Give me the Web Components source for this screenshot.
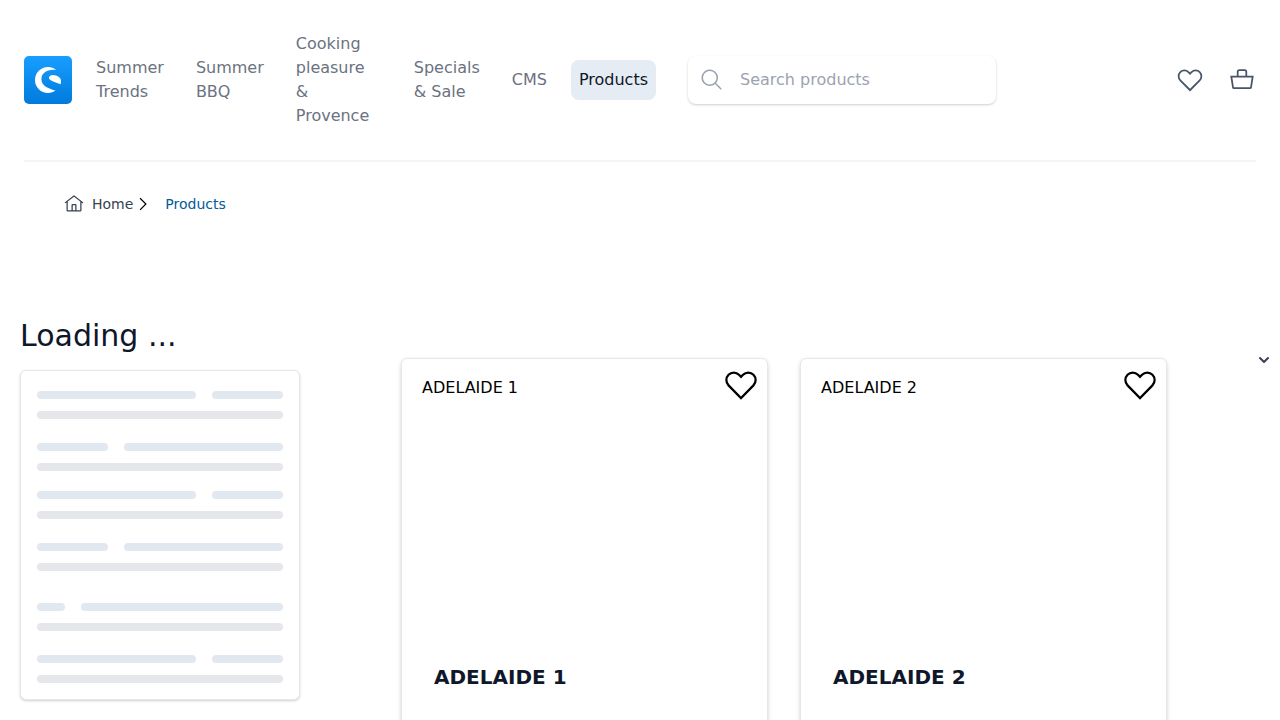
<!DOCTYPE html>
<html lang="en">
<head>
<meta charset="utf-8">
<meta name="viewport" content="width=device-width, initial-scale=1">
<title>Products</title>
<style>
body { margin: 0; background: #fff; color: #000; font: 16px/24px "DejaVu Sans", sans-serif; }
</style>
</head>
<body>
<shop-header>
  <nav-item href="#trends">Summer Trends</nav-item>
  <nav-item href="#bbq">Summer BBQ</nav-item>
  <nav-item href="#cooking">Cooking pleasure &amp; Provence</nav-item>
  <nav-item href="#sale">Specials &amp; Sale</nav-item>
  <nav-item href="#cms">CMS</nav-item>
  <nav-item href="#products" active>Products</nav-item>
</shop-header>
<shop-breadcrumb></shop-breadcrumb>
<shop-listing>
  <filter-skeleton slot="filters"></filter-skeleton>
  <product-card name="ADELAIDE 1"></product-card>
  <product-card name="ADELAIDE 2"></product-card>
</shop-listing>

<script>
const ICONS = {
  heart: '0 0 32 32|M22.45,6a5.47,5.47,0,0,1,3.91,1.64,5.7,5.7,0,0,1,0,8L16,26.13,5.64,15.64a5.7,5.7,0,0,1,0-8,5.48,5.48,0,0,1,7.82,0L16,10.24l2.53-2.58A5.44,5.44,0,0,1,22.45,6m0-2a7.47,7.47,0,0,0-5.34,2.24L16,7.36,14.89,6.24a7.49,7.49,0,0,0-10.68,0,7.72,7.72,0,0,0,0,10.82L16,29,27.79,17.06a7.72,7.72,0,0,0,0-10.82A7.49,7.49,0,0,0,22.45,4Z',
  bag: '0 0 28 28|M3.3 10.500H24.700L23 21.300Q22.900 22.200 22 22.200H6Q5.100 22.200 5 21.300ZM9.700 10.500V5.700Q9.700 4 11.400 4H16.600Q18.300 4 18.300 5.700V10.500|stroke',
  search: '0 0 32 32|M29,27.5859l-7.5521-7.5521a11.0177,11.0177,0,1,0-1.4141,1.4141L27.5859,29ZM4,13a9,9,0,1,1,9,9A9.01,9.01,0,0,1,4,13Z',
  home: '0 0 32 32|M16.6123,2.2138a1.01,1.01,0,0,0-1.2427,0L1,13.4194l1.2427,1.5717L4,13.6208V26a2.0041,2.0041,0,0,0,2,2H26a2.0037,2.0037,0,0,0,2-2V13.63L29.7573,15,31,13.4282ZM18,26H14V18h4Zm2,0V18a2.0023,2.0023,0,0,0-2-2H14a2.002,2.002,0,0,0-2,2v8H6V12.0615l10-7.79,10,7.8005V26Z',
  right: '0 0 32 32|M22 16L12 26l-1.4-1.4 8.6-8.6-8.6-8.6L12 6z',
  down: '0 0 20 20|M5.293 7.293a1 1 0 011.414 0L10 10.586l3.293-3.293a1 1 0 111.414 1.414l-4 4a1 1 0 01-1.414 0l-4-4a1 1 0 010-1.414z'
};
const BASE = `<style>
*, ::before { box-sizing: border-box; }
a { color: inherit; text-decoration: none; }
button { display: block; margin: 0; padding: 0; border: 0; background: none; color: inherit; font: inherit; cursor: pointer; }
</style>`;
function define(tag, markup) {
  customElements.define(tag, class extends HTMLElement {
    constructor() {
      super();
      const html = typeof markup === 'function' ? markup(this) : markup;
      this.attachShadow({ mode: 'open' }).innerHTML = BASE + html;
    }
  });
}

define('ui-icon', el => {
  const [box, d, mode] = ICONS[el.getAttribute('name')].split('|');
  return `<style>
    :host { display: block; flex: none; width: 24px; height: 24px; }
    svg { display: block; width: 100%; height: 100%; fill: currentColor; }
    .stroke { fill: none; stroke: currentColor; }
  </style><svg viewBox="${box}" aria-hidden="true"><path class="${mode || 'fill'}" stroke-width="1.75" d="${d}"/></svg>`
    .replace(mode ? '' : ' stroke-width="1.75"', '');
});

define('shop-logo', `<style>
    :host { display: block; flex: none; width: 48px; height: 48px; }
    svg { display: block; }
  </style>
  <a href="#home" aria-label="Shop home"><svg width="48" height="48" viewBox="0 0 48 48" aria-hidden="true">
    <defs><linearGradient id="g" x1="0" y1="0" x2="0" y2="1"><stop stop-color="#189eff"/><stop offset="1" stop-color="#007bdc"/></linearGradient></defs>
    <rect width="48" height="48" rx="5" fill="url(#g)"/>
    <path fill="#fff" d="M32.3 14C30 12 27.300 11 24 11A13 13 0 0 0 24 37C27 37 29.500 36.200 31.500 34.600C25.500 32.600 17.400 30.400 17.400 23.200C17.400 17 23.300 12.800 32.300 14Z"/>
    <path fill="#fff" d="M36.600 28.300C37.300 26 37 23.300 36.400 22.400C34 20 31.500 19 29 19C26.500 19 25 20.200 25 21.800C25 24.700 31 25.900 36.600 28.300Z"/>
  </svg></a>`);

define('nav-item', el => {
  const active = el.hasAttribute('active');
  return `<style>
    :host { display: block; color: #6b7280; }
    :host([active]) { color: #0f172a; }
    a { display: block; padding: 8px; border-radius: 8px; }
    :host([active]) a { background: #e5ecf3; }
  </style><a href="${el.getAttribute('href')}"${active ? ' aria-current="page"' : ''}><slot></slot></a>`;
});

define('search-box', `<style>
    :host { display: block; min-width: 0; }
    label { display: flex; align-items: center; gap: 16px; height: 48px; padding: 0 12px; border-radius: 8px; color: #9ca3af; background: #fff;
      box-shadow: 0 1px 3px rgba(0,0,0,.1), 0 1px 2px rgba(0,0,0,.1); }
    input { flex: 1; min-width: 0; padding: 0; border: 0; outline: 0; background: none; color: #111827; font: inherit; }
    input::placeholder { color: #9ca3af; opacity: 1; }
  </style>
  <label><ui-icon name="search"></ui-icon><input type="search" placeholder="Search products" aria-label="Search products"></label>`);

define('shop-header', `<style>
    :host { display: block; padding: 0 24px; }
    header { display: grid; grid-template-columns: minmax(0, 1fr) 25% 228px; gap: 32px; align-items: center; padding: 24px 0; border-bottom: 2px solid #f3f4f6; }
    .left, nav { display: flex; align-items: center; gap: 16px; min-width: 0; }
    .actions { display: flex; justify-content: flex-end; gap: 24px; color: #475569; }
    .actions ui-icon { width: 28px; height: 28px; }
  </style>
  <header>
    <div class="left"><shop-logo></shop-logo><nav aria-label="Main"><slot></slot></nav></div>
    <search-box></search-box>
    <div class="actions">
      <button aria-label="Wishlist"><ui-icon name="heart"></ui-icon></button>
      <button aria-label="Cart"><ui-icon name="bag"></ui-icon></button>
    </div>
  </header>`);

define('shop-breadcrumb', `<style>
    :host { display: block; padding: 32px 64px; font-size: 14px; line-height: 20px; }
    nav, a { display: flex; align-items: center; }
    .home { gap: 8px; color: #374151; }
    .current { margin-left: 12px; color: #005b99; }
    ui-icon { width: 20px; height: 20px; }
  </style>
  <nav aria-label="Breadcrumb">
    <a class="home" href="#home"><ui-icon name="home"></ui-icon>Home</a>
    <ui-icon name="right"></ui-icon>
    <a class="current" href="#products" aria-current="page">Products</a>
  </nav>`);

define('skeleton-lines', el => `<style>
    :host { display: grid; grid-template-columns: ${el.getAttribute('cols')}; gap: 12px 16px; }
    i { height: 8px; border-radius: 4px; background: #e2e8f0; }
    i:last-child { grid-column: 1 / -1; background: #e5e7eb; }
  </style><i></i><i></i><i></i>`);

define('filter-skeleton', () => {
  const long = '<skeleton-lines cols="159px minmax(0, 1fr)"></skeleton-lines>';
  const short = '<skeleton-lines cols="71px minmax(0, 1fr)"></skeleton-lines>';
  const tiny = '<skeleton-lines cols="28px minmax(0, 1fr)"></skeleton-lines>';
  return `<style>
    :host { display: block; }
    h1 { margin: 0 0 16px; color: #0f172a; font-size: 30px; font-weight: 400; line-height: 36px; }
    .panel { padding: 20px 16px 16px; border: 1px solid #e5e7eb; border-radius: 6px; background: #fff;
      box-shadow: 0 1px 3px rgba(0,0,0,.1), 0 1px 2px rgba(0,0,0,.1); }
    .group { display: grid; gap: 24px; }
    .group + .group { margin-top: 20px; }
    .group:last-child { margin-top: 32px; }
  </style>
  <h1>Loading ...</h1>
  <div class="panel" aria-busy="true">
    <div class="group">${long}${short}</div>
    <div class="group">${long}${short}</div>
    <div class="group">${tiny}${long}</div>
  </div>`;
});

define('product-card', el => `<style>
    :host { display: block; min-width: 0; }
    article { position: relative; border: 1px solid #e5e7eb; border-radius: 6px; background: #fff;
      box-shadow: 0 4px 6px -1px rgba(0,0,0,.1), 0 2px 4px -1px rgba(0,0,0,.1), 0 0 4px rgba(0,0,0,.05); }
    .cover { display: block; height: 288px; padding: 17px 20px; }
    button { position: absolute; top: 8px; right: 8px; }
    button ui-icon { width: 36px; height: 36px; }
    .info { padding: 16px 32px 96px; }
    h2 { margin: 0; color: #0f172a; font-size: 20px; font-weight: 700; line-height: 28px; }
  </style>
  <article>
    <a class="cover" href="#detail">${el.getAttribute('name')}</a>
    <button aria-label="Add to wishlist"><ui-icon name="heart"></ui-icon></button>
    <div class="info"><h2><a href="#detail">${el.getAttribute('name')}</a></h2></div>
  </article>`);

define('shop-listing', `<style>
    :host { display: block; padding: 72px 6px 24px 20px; }
    main { display: grid; grid-template-columns: 280px minmax(0, 1fr) 20px; }
    .products { display: grid; grid-template-columns: repeat(auto-fill, minmax(320px, 1fr)); gap: 32px; align-content: start; margin: 40px 87px 0 101px; }
    .sort { margin-top: 32px; height: 20px; color: #374151; }
    .sort ui-icon { width: 20px; height: 20px; }
  </style>
  <main>
    <slot name="filters"></slot>
    <div class="products"><slot></slot></div>
    <button class="sort" aria-label="Sort products"><ui-icon name="down"></ui-icon></button>
  </main>`);
</script>
</body>
</html>
